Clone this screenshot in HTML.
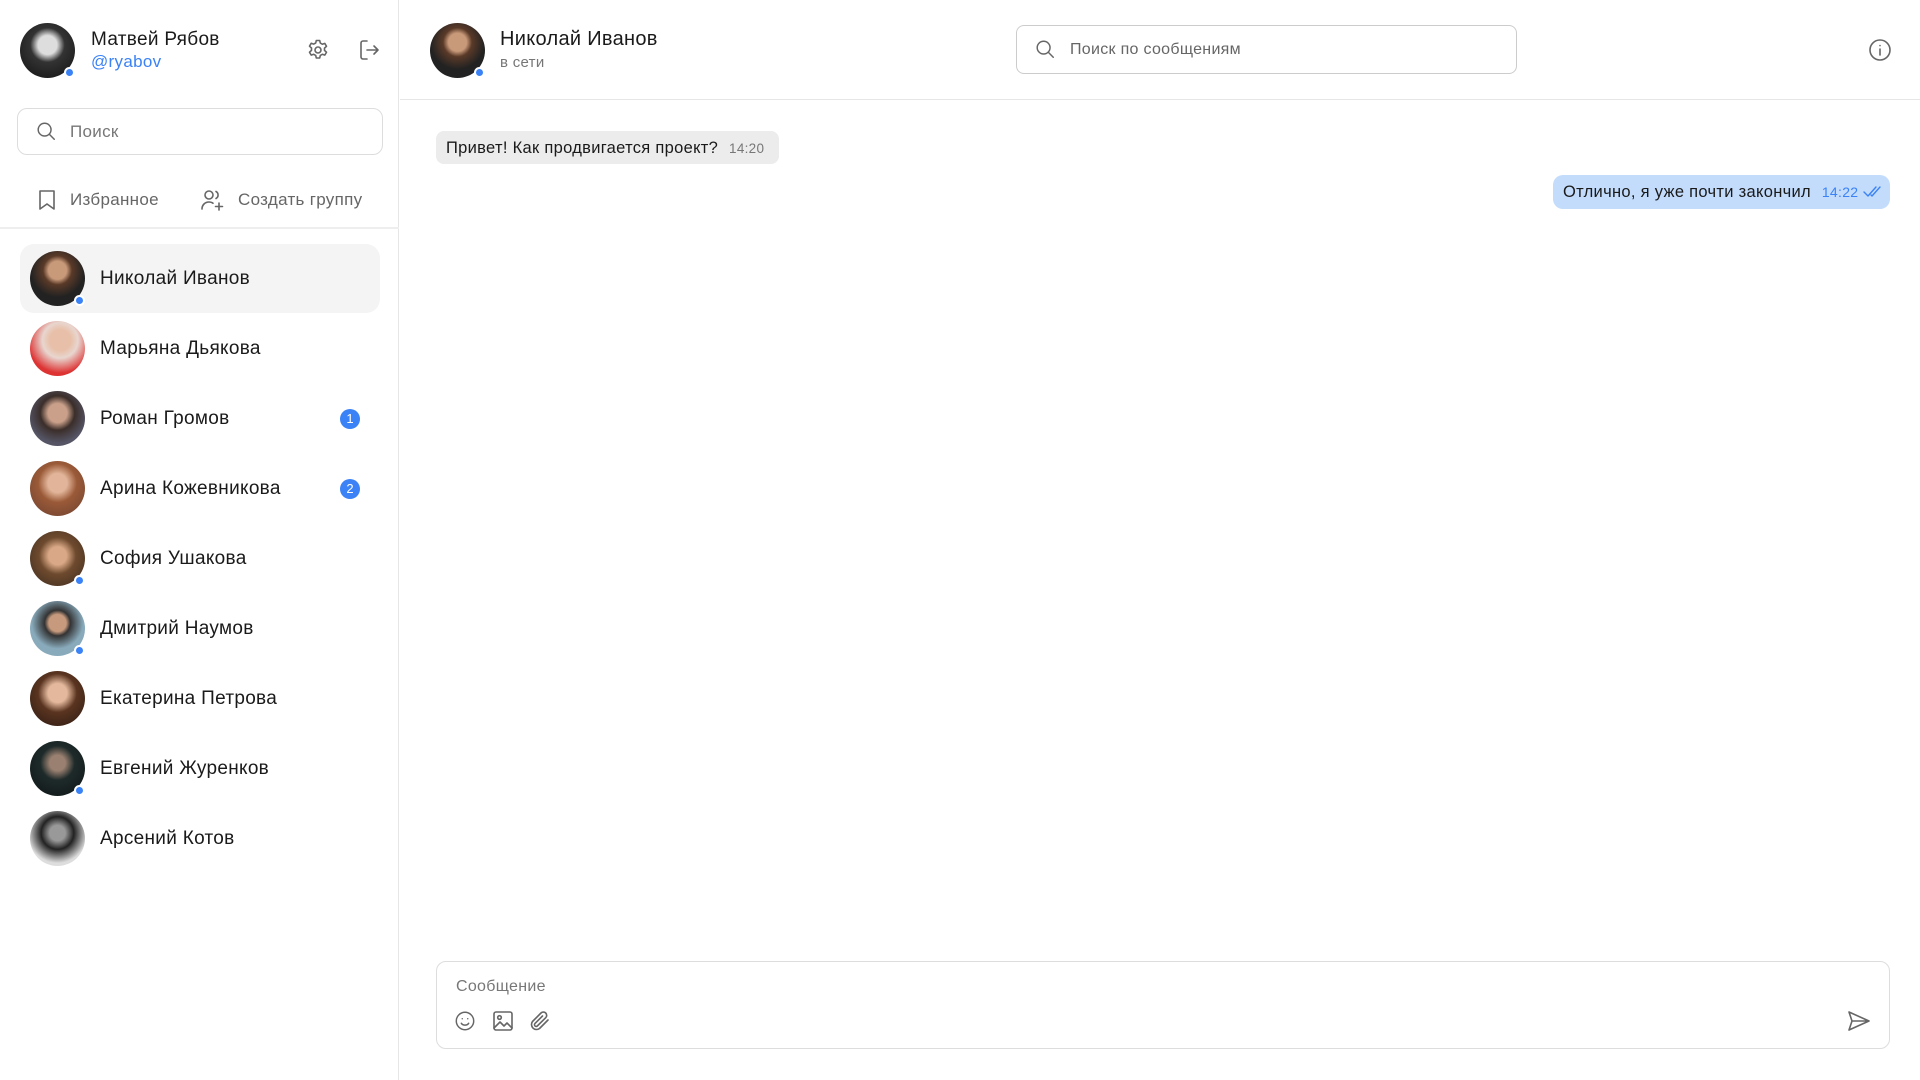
<!DOCTYPE html>
<html><head><meta charset="utf-8"><style>
*{box-sizing:border-box;margin:0;padding:0}
body{width:1920px;height:1080px;overflow:hidden;background:#fff;font-family:"Liberation Sans","DejaVu Sans",sans-serif;color:#1a1a1a;position:relative;letter-spacing:0.3px}
.abs{position:absolute}
.side{left:0;top:0;width:399px;height:1080px;border-right:1px solid #e6e6e6}
.av{position:absolute;border-radius:50%;width:55px;height:55px}
.dot{position:absolute;width:11px;height:11px;border-radius:50%;background:#3b82f6;border:2px solid #fff;right:0px;bottom:0px}
.item{position:absolute;left:20px;width:360px;height:69px;border-radius:14px}
.item .av{left:10px;top:7px}
.item .nm{position:absolute;left:80px;top:24px;font-size:19px}
.badge{position:absolute;left:320px;top:25px;width:20px;height:20px;border-radius:50%;background:#3b82f6;color:#fff;font-size:13px;text-align:center;line-height:20px;letter-spacing:0}
svg{position:absolute;fill:none;stroke:#666;stroke-width:1.6;stroke-linecap:round;stroke-linejoin:round}
</style></head><body>
<div class="abs side">
  <div class="av" style="left:20px;top:23px;background:radial-gradient(circle at 50% 40%,#ddd 0 22%,#333 40%,#111)"><div class="dot"></div></div>
  <div class="abs" style="left:91px;top:29px;font-size:19px">Матвей Рябов</div>
  <div class="abs" style="left:91px;top:52px;font-size:17px;color:#3b82f6">@ryabov</div>
  <svg style="left:306px;top:38px" width="24" height="24" viewBox="0 0 24 24"><circle cx="12" cy="12" r="3"/><path d="M10.3 2.5h3.4l.6 2.6 2 1.1 2.5-.8 1.7 2.9-2 1.8v2.3l2 1.8-1.7 2.9-2.5-.8-2 1.1-.6 2.6h-3.4l-.6-2.6-2-1.1-2.5.8-1.7-2.9 2-1.8V10l-2-1.8 1.7-2.9 2.5.8 2-1.1z"/></svg>
  <svg style="left:357px;top:38px" width="24" height="24" viewBox="0 0 24 24"><path d="M10 3H6a2 2 0 0 0-2 2v14a2 2 0 0 0 2 2h4M10 12h11M17 8l4 4-4 4"/></svg>
  <div class="abs" style="left:17px;top:108px;width:366px;height:47px;border:1px solid #ddd;border-radius:10px"></div>
  <svg style="left:35px;top:120px" width="22" height="22" viewBox="0 0 24 24"><circle cx="10.5" cy="10.5" r="7"/><path d="M16 16l5 5"/></svg>
  <div class="abs" style="left:70px;top:122px;font-size:17px;color:#777">Поиск</div>
  <svg style="left:37px;top:189px" width="20" height="22" viewBox="0 0 20 22"><path d="M3 2h14v18l-7-5-7 5z"/></svg>
  <div class="abs" style="left:70px;top:190px;font-size:17px;color:#666">Избранное</div>
  <svg style="left:200px;top:188px" width="26" height="24" viewBox="0 0 26 24"><circle cx="9" cy="7" r="4"/><path d="M2 21c0-4 3-7 7-7 1.5 0 3 .4 4 1.2M16 3.5a4 4 0 0 1 0 7M19 15v7M15.5 18.5h7"/></svg>
  <div class="abs" style="left:238px;top:190px;font-size:17px;color:#666">Создать группу</div>
  <div class="abs" style="left:0;top:227px;width:399px;height:2px;background:#eee"></div>

  <div class="item" style="top:244px;background:#f4f4f4"><div class="av" style="background:radial-gradient(circle at 50% 35%,#c99a7a 0 20%,#5a3a28 32%,#222 60%)"><div class="dot"></div></div><div class="nm">Николай Иванов</div></div>
  <div class="item" style="top:314px"><div class="av" style="background:radial-gradient(circle at 55% 35%,#e8bfa8 0 22%,#e8d6cf 38%,#d33 70%)"></div><div class="nm">Марьяна Дьякова</div></div>
  <div class="item" style="top:384px"><div class="av" style="background:radial-gradient(circle at 50% 40%,#caa08a 0 22%,#3b2e2a 40%,#556 70%)"></div><div class="nm">Роман Громов</div><div class="badge">1</div></div>
  <div class="item" style="top:454px"><div class="av" style="background:radial-gradient(circle at 50% 40%,#e2b59a 0 22%,#9a5a38 45%,#6b4030)"></div><div class="nm">Арина Кожевникова</div><div class="badge">2</div></div>
  <div class="item" style="top:524px"><div class="av" style="background:radial-gradient(circle at 50% 45%,#d9a886 0 22%,#6e4a2e 45%,#3a2a1e)"><div class="dot"></div></div><div class="nm">София Ушакова</div></div>
  <div class="item" style="top:594px"><div class="av" style="background:radial-gradient(circle at 50% 40%,#c79a7d 0 20%,#333 30%,#8ab 60%)"><div class="dot"></div></div><div class="nm">Дмитрий Наумов</div></div>
  <div class="item" style="top:664px"><div class="av" style="background:radial-gradient(circle at 50% 40%,#e3b89c 0 22%,#5a3420 45%,#2a1a12)"></div><div class="nm">Екатерина Петрова</div></div>
  <div class="item" style="top:734px"><div class="av" style="background:radial-gradient(circle at 50% 40%,#9a8070 0 18%,#1e2a2a 40%,#0e1414)"><div class="dot"></div></div><div class="nm">Евгений Журенков</div></div>
  <div class="item" style="top:804px"><div class="av" style="background:radial-gradient(circle at 50% 40%,#999 0 18%,#222 38%,#ddd 70%)"></div><div class="nm">Арсений Котов</div></div>
</div>

<div class="av" style="left:430px;top:23px;background:radial-gradient(circle at 50% 35%,#c99a7a 0 20%,#5a3a28 32%,#222 60%)"><div class="dot"></div></div>
<div class="abs" style="left:500px;top:28px;font-size:20px">Николай Иванов</div>
<div class="abs" style="left:500px;top:54px;font-size:15px;color:#777">в сети</div>
<div class="abs" style="left:1016px;top:25px;width:501px;height:49px;border:1px solid #ccc;border-radius:8px"></div>
<svg style="left:1034px;top:38px" width="22" height="22" viewBox="0 0 24 24"><circle cx="10.5" cy="10.5" r="7"/><path d="M16 16l5 5"/></svg>
<div class="abs" style="left:1070px;top:41px;font-size:16px;color:#666">Поиск по сообщениям</div>
<svg style="left:1868px;top:38px" width="24" height="24" viewBox="0 0 24 24"><circle cx="12" cy="12" r="10"/><path d="M12 11v6M12 7.5v.1"/></svg>
<div class="abs" style="left:400px;top:99px;width:1520px;height:1px;background:#e6e6e6"></div>

<div class="abs" style="left:436px;top:131px;width:343px;height:33px;background:#ececec;border-radius:8px;font-size:16.5px;line-height:34px;padding-left:10px">Привет! Как продвигается проект? <span style="font-size:13.5px;color:#777;margin-left:6px">14:20</span></div>
<div class="abs" style="left:1553px;top:175px;width:337px;height:34px;background:#c3dcfc;border-radius:10px;font-size:16.5px;line-height:35px;padding-left:10px">Отлично, я уже почти закончил <span style="font-size:14px;color:#3b82f6;margin-left:6px">14:22</span>
<svg style="left:310px;top:10px;stroke:#3b82f6;stroke-width:1.4" width="20" height="14" viewBox="0 0 20 14"><path d="M1 7l4 4 8-9M8 10l1 1 8-9"/></svg></div>

<div class="abs" style="left:436px;top:961px;width:1454px;height:88px;border:1px solid #ddd;border-radius:10px"></div>
<div class="abs" style="left:456px;top:978px;font-size:16px;color:#777">Сообщение</div>
<svg style="left:454px;top:1010px" width="22" height="22" viewBox="0 0 24 24"><circle cx="12" cy="12" r="9.5"/><path d="M8 14.5c1 1.5 2.3 2 4 2s3-.5 4-2M9 9.5v.1M15 9.5v.1"/></svg>
<svg style="left:491px;top:1009px" width="24" height="24" viewBox="0 0 24 24"><rect x="3" y="3" width="18" height="18" rx="2"/><circle cx="8.5" cy="8.5" r="1.8"/><path d="M3 19l6-6 4 4 3-3 5 5"/></svg>
<svg style="left:528px;top:1009px" width="24" height="24" viewBox="0 0 24 24"><path d="M20 11l-8.5 8.5a5 5 0 0 1-7-7L13 4a3.3 3.3 0 0 1 4.7 4.7L9.3 17a1.7 1.7 0 0 1-2.4-2.4L14.5 7"/></svg>
<svg style="left:1846px;top:1009px" width="26" height="24" viewBox="0 0 26 24"><path d="M3 3l20 9-20 9 3-9zM6 12h17"/></svg>
</body></html>
